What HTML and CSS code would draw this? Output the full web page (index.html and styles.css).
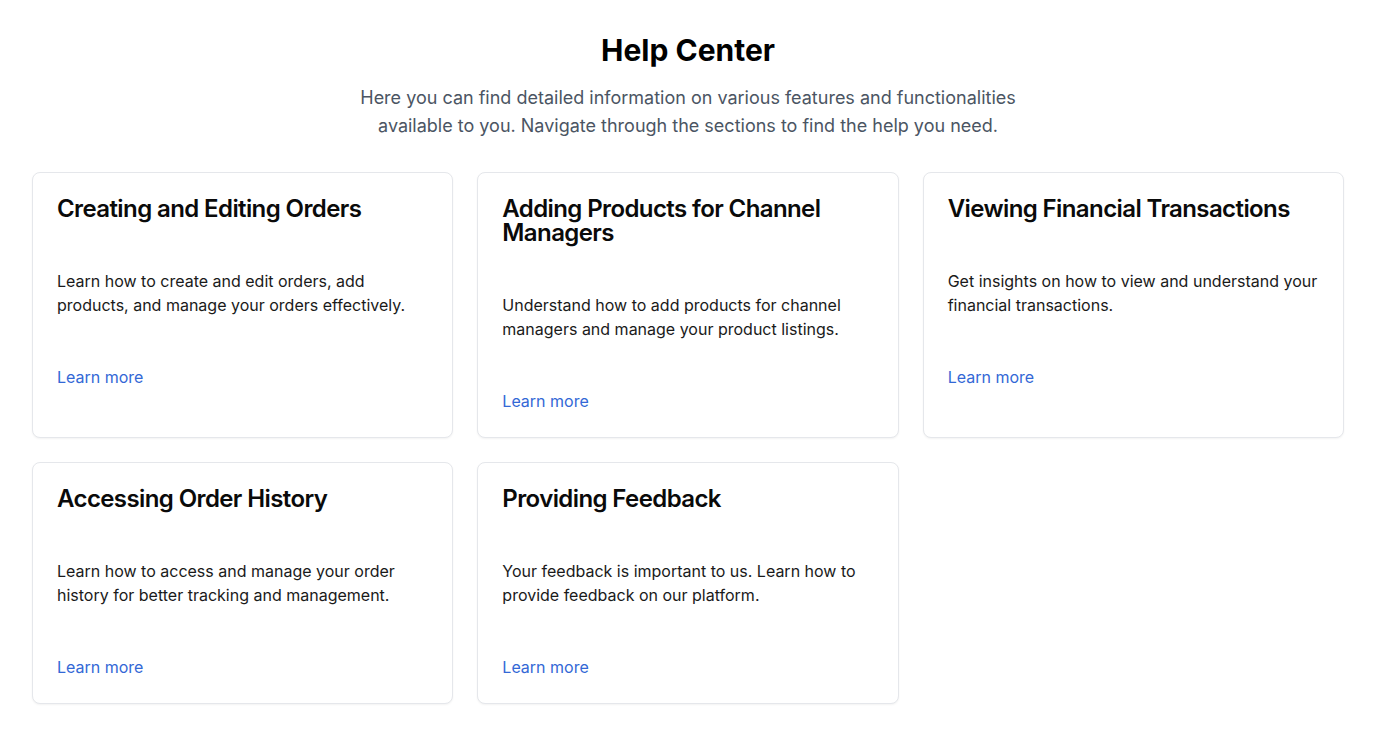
FILE: index.html
```html
<!DOCTYPE html>
<html lang="en">
<head>
<meta charset="utf-8">
<title>Help Center</title>
<link rel="stylesheet" href="styles.css">
</head>
<body>
<main class="page">
  <header class="intro">
    <h1 class="intro-title">Help Center</h1>
    <p class="intro-text">Here you can find detailed information on various features and functionalities available to you. Navigate through the sections to find the help you need.</p>
  </header>
  <section class="grid">
    <article class="card">
      <h2 class="card-title">Creating and Editing Orders</h2>
      <p class="card-text">Learn how to create and edit orders, add products, and manage your orders effectively.</p>
      <a class="card-link" href="#">Learn more</a>
    </article>
    <article class="card">
      <h2 class="card-title">Adding Products for Channel Managers</h2>
      <p class="card-text">Understand how to add products for channel managers and manage your product listings.</p>
      <a class="card-link" href="#">Learn more</a>
    </article>
    <article class="card">
      <h2 class="card-title">Viewing Financial Transactions</h2>
      <p class="card-text">Get insights on how to view and understand your financial transactions.</p>
      <a class="card-link" href="#">Learn more</a>
    </article>
    <article class="card">
      <h2 class="card-title">Accessing Order History</h2>
      <p class="card-text">Learn how to access and manage your order history for better tracking and management.</p>
      <a class="card-link" href="#">Learn more</a>
    </article>
    <article class="card">
      <h2 class="card-title">Providing Feedback</h2>
      <p class="card-text">Your feedback is important to us. Learn how to provide feedback on our platform.</p>
      <a class="card-link" href="#">Learn more</a>
    </article>
  </section>
</main>
</body>
</html>
```

FILE: styles.css
```css
* { box-sizing: border-box; }
html, body { margin: 0; padding: 0; background: #ffffff; }
body {
  font-family: Inter, "Noto Sans", sans-serif;
  color: #0a0a0a;
}
.page {
  padding: 32px 32px;
}
.intro {
  display: flex;
  flex-direction: column;
  align-items: center;
  margin-bottom: 32px;
}
.intro-title {
  margin: 0 0 16px;
  font-size: 30px;
  line-height: 36px;
  font-weight: 700;
  color: #000;
}
.intro-text {
  margin: 0;
  max-width: 672px;
  text-align: center;
  font-size: 18px;
  line-height: 28px;
  color: #4b5563;
}
.grid {
  display: grid;
  grid-template-columns: repeat(3, 1fr);
  gap: 24px;
}
.card {
  display: flex;
  flex-direction: column;
  align-items: flex-start;
  gap: 48px;
  padding: 24px;
  border: 1px solid #e5e7eb;
  border-radius: 8px;
  background: #fff;
  box-shadow: 0 1px 2px rgba(0,0,0,0.05);
}
.card-title {
  margin: 0;
  font-size: 24px;
  line-height: 24px;
  font-weight: 600;
  letter-spacing: -0.6px;
  color: #0a0a0a;
}
.card-text {
  margin: 0;
  font-size: 16px;
  line-height: 24px;
  color: #1a1a1a;
}
.card-link {
  font-size: 16px;
  line-height: 24px;
  color: #3368d6;
  text-decoration: none;
}
```
